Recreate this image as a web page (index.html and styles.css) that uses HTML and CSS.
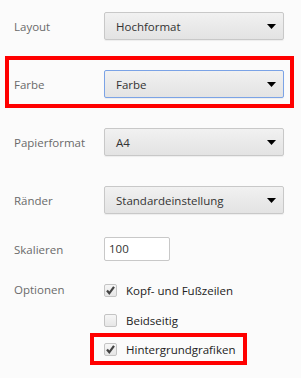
FILE: index.html
```html
<!DOCTYPE html>
<html>
<head>
  <title>Drucken</title>
  <link rel="stylesheet" href="styles.css">
</head>
<body>
  <div class="settings">
    <div class="row row-layout">
      <span class="label">Layout</span>
      <div class="select">Hochformat<svg class="arrow" width="9" height="5" viewBox="0 0 9 5"><polygon points="0,0 9,0 4.5,5"/></svg></div>
    </div>

    <div class="row highlight">
      <span class="label">Farbe</span>
      <div class="select focused">Farbe<svg class="arrow" width="9" height="5" viewBox="0 0 9 5"><polygon points="0,0 9,0 4.5,5"/></svg></div>
    </div>

    <div class="row row-paper">
      <span class="label">Papierformat</span>
      <div class="select">A4<svg class="arrow" width="9" height="5" viewBox="0 0 9 5"><polygon points="0,0 9,0 4.5,5"/></svg></div>
    </div>

    <div class="row row-margins">
      <span class="label">Ränder</span>
      <div class="select">Standardeinstellung<svg class="arrow" width="9" height="5" viewBox="0 0 9 5"><polygon points="0,0 9,0 4.5,5"/></svg></div>
    </div>

    <div class="row row-scale">
      <span class="label">Skalieren</span>
      <div class="textbox">100</div>
    </div>

    <div class="row row-options">
      <span class="label">Optionen</span>
      <div class="options">
        <div class="option">
          <span class="checkbox"><svg width="11" height="11" viewBox="0 0 11 11"><path d="M2 5.5 L4.3 8.3 L9 1.8" /></svg></span>
          Kopf- und Fußzeilen
        </div>
        <div class="option">
          <span class="checkbox"></span>
          Beidseitig
        </div>
        <div class="option option-highlight">
          <span class="checkbox"><svg width="11" height="11" viewBox="0 0 11 11"><path d="M2 5.5 L4.3 8.3 L9 1.8" /></svg></span>
          Hintergrundgrafiken
        </div>
      </div>
    </div>
  </div>
</body>
</html>
```

FILE: styles.css
```css
body {
  margin: 0;
  background-color: #fbfbfb;
  font-family: "Open Sans", "Noto Sans", sans-serif;
  font-size: 11.5px;
}

.settings {
  padding-top: 12px;
}

.row {
  display: flex;
  align-items: center;
  padding-left: 14px;
}

.label {
  width: 90px;
  color: #6a6a6a;
}

.select {
  position: relative;
  display: flex;
  align-items: center;
  box-sizing: border-box;
  width: 180px;
  height: 28px;
  padding-left: 11px;
  border: 1px solid #c8c8c8;
  border-radius: 2px;
  background: linear-gradient(#f1f1f1, #e3e3e3);
  box-shadow: 0 1px 1px rgba(0, 0, 0, 0.06);
  color: #333;
}

.select.focused {
  border-color: #7ba3e6;
}

.arrow {
  position: absolute;
  right: 7px;
  top: 11px;
  fill: #000;
}

.highlight {
  box-sizing: border-box;
  width: 289px;
  margin: 16px 0 0 5px;
  padding: 10px 5px 6px 5px;
  border: 4px solid #ff0000;
}

.row-paper {
  margin-top: 20px;
}

.row-margins {
  margin-top: 30px;
}

.row-scale {
  margin-top: 23px;
}

.textbox {
  box-sizing: border-box;
  width: 66px;
  height: 24px;
  padding-left: 4px;
  line-height: 22px;
  border: 1px solid #c8c8c8;
  border-radius: 2px;
  background-color: #fff;
  color: #333;
}

.row-options {
  align-items: flex-start;
  margin-top: 19px;
}

.row-options .label {
  line-height: 20px;
}

.options {
  display: flex;
  flex-direction: column;
  gap: 10px;
}

.option {
  display: flex;
  align-items: center;
  height: 20px;
  color: #222;
}

.checkbox {
  display: flex;
  align-items: center;
  justify-content: center;
  box-sizing: border-box;
  width: 13px;
  height: 13px;
  margin-right: 9px;
  border: 1px solid #c4c4c4;
  border-radius: 2px;
  background: linear-gradient(#f6f6f6, #e6e6e6);
}

.checkbox path {
  fill: none;
  stroke: #444;
  stroke-width: 2.2;
}

.option-highlight {
  box-sizing: border-box;
  width: 157px;
  height: 32px;
  margin: -7px 0 0 -14px;
  padding-left: 10px;
  border: 4px solid #ff0000;
}
```
